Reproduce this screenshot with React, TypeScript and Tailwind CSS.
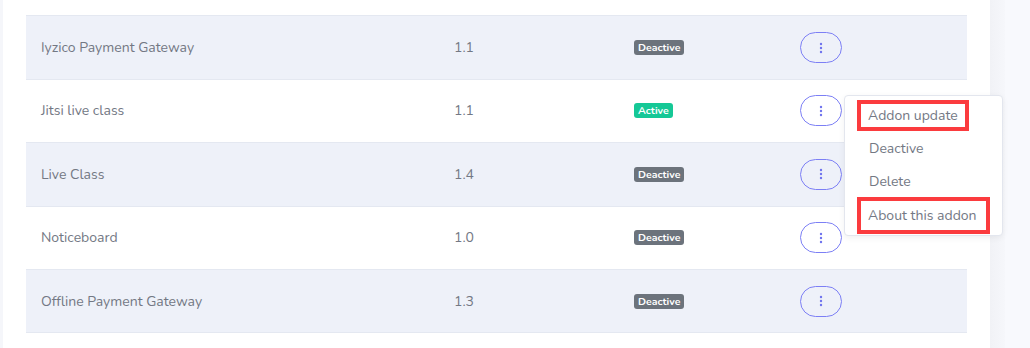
import React from "react";

type Row = { name: string; version: string; active: boolean; shaded: boolean };

const rows: Row[] = [
  { name: "", version: "", active: false, shaded: false },
  { name: "Iyzico Payment Gateway", version: "1.1", active: false, shaded: true },
  { name: "Jitsi live class", version: "1.1", active: true, shaded: false },
  { name: "Live Class", version: "1.4", active: false, shaded: true },
  { name: "Noticeboard", version: "1.0", active: false, shaded: false },
  { name: "Offline Payment Gateway", version: "1.3", active: false, shaded: true },
];

function DotsButton() {
  return (
    <div className="flex h-[31px] w-[42px] items-center justify-center rounded-full border border-[#7c7ff5] bg-transparent">
      <svg width="4" height="12" viewBox="0 0 4 12">
        <circle cx="2" cy="2" r="1.2" fill="#6f73ee" />
        <circle cx="2" cy="6" r="1.2" fill="#6f73ee" />
        <circle cx="2" cy="10" r="1.2" fill="#6f73ee" />
      </svg>
    </div>
  );
}

function Badge({ active }: { active: boolean }) {
  return active ? (
    <span className="rounded-[3px] bg-[#15c896] px-[4px] py-[1px] text-[10.5px] font-bold leading-[13px] text-white">
      Active
    </span>
  ) : (
    <span className="rounded-[3px] bg-[#6c737c] px-[4px] py-[1px] text-[10.5px] font-bold leading-[13px] text-white">
      Deactive
    </span>
  );
}

function Menu() {
  return (
    <div className="absolute left-[44px] top-[0px] z-10 w-[159px] rounded-[4px] border border-[#e3e6ee] bg-white pt-[4px] pb-[1px] shadow-[0_2px_6px_rgba(0,0,0,0.06)]">
      <div className="flex flex-col text-[14px] text-[#737884]">
        <div className="mx-[12px] flex h-[31px] w-[112px] items-center border-[4px] border-[#fb3b3e] pl-[7px]">Addon update</div>
        <div className="flex h-[34px] items-center pl-[24px]">Deactive</div>
        <div className="flex h-[32px] items-center pl-[24px]">Delete</div>
        <div className="mx-[12px] flex h-[37px] w-[133px] items-center border-[4px] border-[#fb3b3e] pl-[7px]">About this addon</div>
      </div>
    </div>
  );
}

export default function App() {
  return (
    <div
      className="flex h-[348px] w-[1030px] overflow-hidden bg-[#f8f9fd]"
      style={{ fontFamily: "'Nunito', 'Noto Sans', 'Open Sans', sans-serif" }}
    >
      <div className="w-[3px] bg-[#f5f6fa]" />
      <div className="relative w-[987px] bg-white px-[23px]">
        <div className="-mt-[48px] flex flex-col">
          {rows.map((r, i) => (
            <div
              key={i}
              className={`flex h-[63.4px] items-center border-t border-[#e4e8f1] text-[14px] text-[#737884] ${
                r.shaded ? "bg-[#eef1f9]" : "bg-white"
              }`}
            >
              <div className="w-[428px] pl-[15px]">{r.name}</div>
              <div className="w-[180px]">{r.version}</div>
              <div className="flex w-[166px] items-center">{r.name && <Badge active={r.active} />}</div>
              <div className="relative">
                <DotsButton />
                {i === 2 && <Menu />}
              </div>
            </div>
          ))}
          <div className="border-t border-[#e4e8f1]" />
        </div>
      </div>
      <div className="w-[15px] bg-gradient-to-r from-[#f1f2f6] to-[#f6f7fb]" />
    </div>
  );
}
